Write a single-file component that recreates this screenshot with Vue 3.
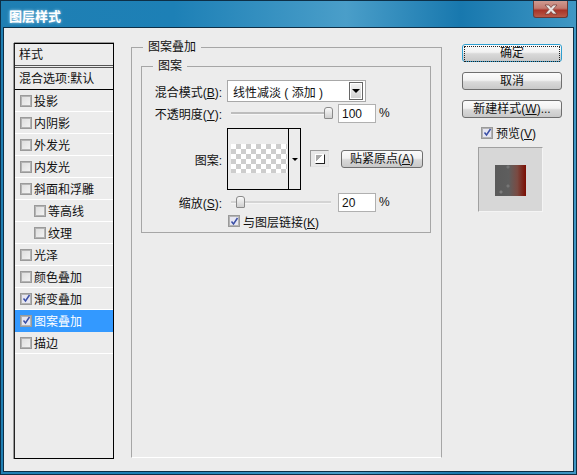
<script setup>
const items = [
  { t: '投影' }, { t: '内阴影' }, { t: '外发光' }, { t: '内发光' }, { t: '斜面和浮雕' },
  { t: '等高线', sub: true }, { t: '纹理', sub: true }, { t: '光泽' }, { t: '颜色叠加' },
  { t: '渐变叠加', on: true }, { t: '图案叠加', on: true, sel: true }, { t: '描边' }
]
</script>

<template>
  <div class="window">
    <header class="titlebar">
      <span class="title">图层样式</span>
      <button class="close" type="button">
        <svg width="16" height="11" viewBox="0 0 16 11"><path d="M2 1h4l2 2.500L10 1h4L10 5.500 14 10h-4L8 7.500 6 10H2l4-4.500z" fill="#e8e4e2" stroke="#6e3a34" stroke-width=".7"/></svg>
      </button>
    </header>
    <div class="client">
      <aside class="list">
        <div class="list-head">样式</div>
        <div class="list-blend">混合选项:默认</div>
        <div v-for="i in items" :key="i.t" class="row" :class="{ sub: i.sub, sel: i.sel }">
          <span class="check" :class="{ on: i.on }">
            <svg v-if="i.on" width="9" height="9" viewBox="0 0 9 9"><path d="M1.500 4.500l2 2.500L7.500 1" fill="none" stroke="#3a4fa6" stroke-width="1.500"/></svg>
          </span>
          <span>{{ i.t }}</span>
        </div>
      </aside>

      <main class="main">
        <fieldset class="group outer">
          <legend>图案叠加</legend>
          <fieldset class="group inner">
            <legend>图案</legend>
            <div class="form">
              <label class="lab">混合模式(<u>B</u>):</label>
              <div class="select">
                <span class="select-text">线性减淡 ( 添加 )</span>
                <span class="select-btn"><i class="tri"></i></span>
              </div>

              <label class="lab">不透明度(<u>Y</u>):</label>
              <div class="line">
                <div class="slider"><span class="thumb thumb-end"></span></div>
                <span class="input">100</span><span class="pct">%</span>
              </div>

              <label class="lab lab-pattern">图案:</label>
              <div class="line pattern-line">
                <div class="pattern">
                  <div class="pattern-swatch"><div class="checker"></div></div>
                  <div class="pattern-arrow"><i class="tri small"></i></div>
                </div>
                <span class="mini"><i class="mini-square"></i></span>
                <button class="btn snap" type="button">贴紧原点(<u>A</u>)</button>
              </div>

              <label class="lab">缩放(<u>S</u>):</label>
              <div class="line">
                <div class="slider light"><span class="thumb thumb-start"></span></div>
                <span class="input">20</span><span class="pct">%</span>
              </div>

              <span></span>
              <div class="link">
                <span class="check on"><svg width="9" height="9" viewBox="0 0 9 9"><path d="M1.500 4.500l2 2.500L7.500 1" fill="none" stroke="#3a4fa6" stroke-width="1.500"/></svg></span>
                <span>与图层链接(<u>K</u>)</span>
              </div>
            </div>
          </fieldset>
        </fieldset>
      </main>

      <aside class="side">
        <button class="btn wide default" type="button"><span class="focus">确定</span></button>
        <button class="btn wide" type="button">取消</button>
        <button class="btn wide" type="button">新建样式(<u>W</u>)...</button>
        <div class="preview-check">
          <span class="check on"><svg width="9" height="9" viewBox="0 0 9 9"><path d="M1.500 4.500l2 2.500L7.500 1" fill="none" stroke="#3a4fa6" stroke-width="1.500"/></svg></span>
          <span>预览(<u>V</u>)</span>
        </div>
        <div class="preview"><div class="preview-art"></div></div>
      </aside>
    </div>
  </div>
</template>

<style scoped>
.window {
  width: 577px;
  height: 475px;
  box-sizing: border-box;
  display: flex;
  flex-direction: column;
  border: 1px solid #0d2f47;
  background: linear-gradient(90deg, #1f7fb3 0%, #1d80b6 30%, #4a9ec9 60%, #1878ae 80%, #3f97c4 100%);
  font: 12px "Liberation Sans", "Noto Sans CJK SC", sans-serif;
  color: #111;
  overflow: hidden;
}
.titlebar {
  height: 26px;
  flex: none;
  display: flex;
  align-items: flex-start;
  justify-content: space-between;
  padding-left: 8px;
  padding-right: 8px;
}
.title {
  margin-top: 5px;
  font-size: 13px;
  font-weight: 700;
  color: #fff;
  text-shadow: 0 0 3px #bfe3f5;
}
.close {
  width: 35px;
  height: 17px;
  padding: 0;
  display: flex;
  align-items: center;
  justify-content: center;
  border: 1px solid #6b3a36;
  border-top: 0;
  border-radius: 0 0 3px 3px;
  background: linear-gradient(#cf9a90 0%, #c27a70 45%, #a83428 58%, #b85a48 100%);
}
.client {
  flex: 1;
  margin: 0 2px 2px 2px;
  border: 1px solid #0d2f47;
  background: #ececec;
  display: flex;
  align-items: flex-start;
  padding: 15px 10px 0 10px;
  min-height: 0;
}
.list {
  width: 100px;
  height: 416px;
  flex: none;
  box-sizing: border-box;
  border: 1px solid #000;
  border-left-color: #222;
  box-shadow: -1px 0 0 #999, 0 -1px 0 #999;
}
.list-head {
  height: 21px;
  line-height: 23px;
  padding-left: 4px;
  border-bottom: 3px double #555;
}
.list-blend {
  height: 21px;
  line-height: 23px;
  padding-left: 4px;
  border-bottom: 1px solid #000;
}
.row {
  height: 21px;
  display: flex;
  align-items: center;
  gap: 2px;
  padding-left: 5px;
  border-bottom: 1px solid #fff;
}
.row.sub { padding-left: 19px; }
.row.sel { background: #3399ff; color: #fff; border-bottom-color: #3399ff; }
.check {
  width: 12px;
  height: 12px;
  box-sizing: border-box;
  flex: none;
  display: flex;
  align-items: center;
  justify-content: center;
  border: 1px solid #9a9a9a;
  box-shadow: inset 0 0 0 1px #b4b4b4;
  background: linear-gradient(135deg, #dcdcdc, #f4f4f4);
}
.check.on { background: #e6e6f2; }
.main {
  width: 311px;
  margin-left: 17px;
  flex: none;
}
.group {
  margin: 0;
  min-width: 0;
  box-sizing: border-box;
  border: 1px solid #a6a6a6;
  border-bottom-color: #fff;
}
.group legend { padding: 0 5px; line-height: 14px; }
.outer {
  height: 418px;
  margin-top: -3px;
  padding: 5px 10px 0 9px;
}
.outer > legend { margin-left: 2px; }
.inner {
  height: 174px;
  padding: 0;
  border-bottom-color: #a6a6a6;
}
.inner > legend { margin-left: 11px; }
.form {
  display: grid;
  grid-template-columns: 80px 1fr;
  column-gap: 5px;
  grid-template-rows: 22px 20px 66px 22px 14px;
  padding-top: 7px;
  row-gap: 1px;
}
.lab {
  justify-self: end;
  align-self: center;
  white-space: nowrap;
}
.lab-pattern { margin-top: 5px; }
.select {
  width: 139px;
  height: 22px;
  box-sizing: border-box;
  border: 1px solid #a8a8a8;
  background: #fff;
  display: flex;
  align-items: center;
  justify-content: space-between;
  padding: 0 2px 0 5px;
}
.select-text { white-space: pre; }
.select-btn {
  width: 14px;
  height: 18px;
  box-sizing: border-box;
  display: flex;
  align-items: center;
  justify-content: center;
  border: 1px solid #666;
  box-shadow: inset 0 0 0 1px #fff;
  background: linear-gradient(#f4f4f4, #cfcfcf);
}
.tri {
  width: 0;
  height: 0;
  border-left: 4px solid transparent;
  border-right: 4px solid transparent;
  border-top: 4px solid #000;
}
.tri.small { border-left-width: 3px; border-right-width: 3px; border-top-width: 3px; }
.line { display: flex; align-items: center; }
.slider {
  position: relative;
  width: 100px;
  height: 2px;
  margin-left: 4px;
  background: #bdbdbd;
  border-bottom: 1px solid #f6f6f6;
}
.slider.light { background: #d4d4d4; }
.thumb {
  position: absolute;
  top: -5px;
  width: 9px;
  height: 12px;
  box-sizing: border-box;
  border: 1px solid #8a8a8a;
  border-radius: 3px 3px 1px 1px;
  background: linear-gradient(#fafafa, #cfcfcf);
}
.thumb-end { right: -2px; }
.thumb-start { left: 5px; }
.input {
  width: 38px;
  height: 19px;
  line-height: 18px;
  box-sizing: border-box;
  margin-left: 7px;
  padding-left: 3px;
  background: #fff;
  border: 1px solid #b0b0b0;
}
.pct { margin-left: 3px; width: 12px; }
.pattern-line { align-items: flex-start; padding-top: 4px; }
.pattern {
  width: 74px;
  height: 62px;
  box-sizing: border-box;
  border: 1px solid #000;
  display: flex;
}
.pattern-swatch {
  flex: 1;
  border-right: 1px solid #000;
  padding-top: 15px;
  padding-left: 3px;
}
.checker {
  width: 56px;
  height: 29px;
  background-color: #fff;
  background-image:
    linear-gradient(45deg, #cdcdcd 25%, transparent 25%, transparent 75%, #cdcdcd 75%),
    linear-gradient(45deg, #cdcdcd 25%, transparent 25%, transparent 75%, #cdcdcd 75%);
  background-size: 10px 10px;
  background-position: 0 0, 5px 5px;
}
.pattern-arrow {
  width: 11px;
  display: flex;
  align-items: center;
  justify-content: center;
}
.mini {
  width: 19px;
  height: 17px;
  margin: 22px 0 0 9px;
  box-sizing: border-box;
  display: flex;
  align-items: center;
  justify-content: center;
  border: 1px solid #e2e2e2;
  border-top-color: #9a9a9a;
  border-left-color: #9a9a9a;
  background: #e8e8e8;
}
.mini-square {
  width: 10px;
  height: 10px;
  box-sizing: border-box;
  background: linear-gradient(135deg, #aaa 0 40%, #fff 41%);
  border: 1px solid #fff;
  border-right-color: #222;
  border-bottom-color: #222;
}
.btn {
  padding: 0;
  font: inherit;
  color: #111;
  border: 1px solid #6f6f6f;
  border-radius: 3px;
  background: linear-gradient(#fbfbfb 0%, #f1f1f1 45%, #d9d9d9 55%, #c9c9c9 100%);
  white-space: nowrap;
}
.snap {
  width: 82px;
  height: 18px;
  line-height: 14px;
  margin: 22px 0 0 12px;
}
.link {
  display: flex;
  align-items: center;
  gap: 3px;
  margin-left: 1px;
}
.side {
  width: 100px;
  margin-left: 20px;
  margin-top: 1px;
  display: flex;
  flex-direction: column;
  align-items: flex-start;
  flex: none;
}
.wide {
  width: 100px;
  height: 18px;
  line-height: 15px;
  margin-bottom: 10px;
}
.default {
  border-color: #2f9fd0;
  padding: 1px;
}
.focus {
  display: block;
  line-height: 13px;
  height: 14px;
  border: 1px dotted #222;
}
.preview-check {
  display: flex;
  align-items: center;
  gap: 3px;
  margin: -4px 0 0 19px;
}
.preview {
  width: 65px;
  height: 65px;
  margin: 6px 0 0 16px;
  box-sizing: border-box;
  padding: 17px 16px;
  background: #d7d7d7;
  border-top: 1px solid #a0a0a0;
  border-left: 1px solid #a0a0a0;
  border-right: 1px solid #f4f4f4;
  border-bottom: 1px solid #f4f4f4;
}
.preview-art {
  width: 31px;
  height: 31px;
  background:
    radial-gradient(circle at 6px 27px, #7d7d7d 0 1px, transparent 2px),
    radial-gradient(circle at 13px 21px, #767676 0 1px, transparent 2px),
    radial-gradient(circle at 13px 2px, #747474 0 1px, transparent 2px),
    linear-gradient(90deg, #5a5a5a 0%, #5e5e5e 45%, #7a4a42 72%, #7c0d02 100%);
}
u { text-decoration: underline; }
</style>

<style>
html, body { margin: 0; background: #1f7fb3; }
</style>
